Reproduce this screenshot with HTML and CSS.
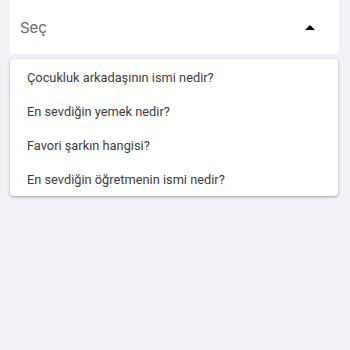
FILE: index.html
```html
<!DOCTYPE html>
<html lang="tr">
<head>
<meta charset="utf-8">
<link rel="stylesheet" href="styles.css">
</head>
<body>
<div class="page">
  <div class="select">
    <span class="placeholder">Seç</span>
    <svg class="arrow" width="10" height="5" viewBox="0 0 10 5"><path d="M0 5 L5 0 L10 5 Z" fill="#000"/></svg>
  </div>
  <ul class="menu">
    <li>Çocukluk arkadaşının ismi nedir?</li>
    <li>En sevdiğin yemek nedir?</li>
    <li>Favori şarkın hangisi?</li>
    <li>En sevdiğin öğretmenin ismi nedir?</li>
  </ul>
</div>
</body>
</html>
```
FILE: styles.css
```css
html, body { margin: 0; padding: 0; }
body {
  background: #f2f2f6;
  font-family: Inter, "Noto Sans", sans-serif;
  width: 350px;
  height: 350px;
  overflow: hidden;
}
.page { padding: 0 10px 0 10px; }
.select {
  height: 54px;
  background: #fff;
  border-radius: 0 0 4px 4px;
  display: flex;
  align-items: center;
  justify-content: space-between;
  padding: 0 24px 0 10px;
  box-sizing: border-box;
  margin-right: 1px;
}
.placeholder { color: #6b6b6b; font-size: 15px; }
.arrow { display: block; }
.menu {
  list-style: none;
  margin: 5px 2px 0 0;
  padding: 1px 0 0;
  background: #fff;
  border-radius: 4px;
  box-shadow: 0 1px 3px rgba(0,0,0,0.35);
}
.menu li {
  height: 34px;
  display: flex;
  align-items: center;
  padding-left: 17px;
  font-family: Roboto, "Liberation Sans", sans-serif;
  font-size: 12.8px;
  color: #3d3d3d;
}
```
